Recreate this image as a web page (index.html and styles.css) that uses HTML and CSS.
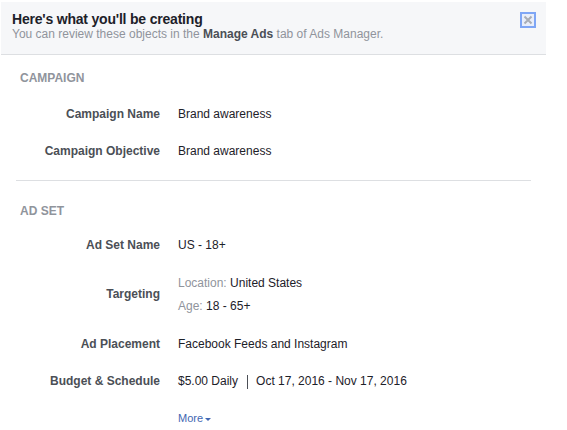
FILE: index.html
```html
<!DOCTYPE html>
<html>
<head>
<meta charset="utf-8">
<link rel="stylesheet" href="styles.css">
</head>
<body>
<div class="panel">
  <div class="header">
    <div class="header-text">
      <div class="title">Here's what you'll be creating</div>
      <div class="subtitle">You can review these objects in the <b>Manage Ads</b> tab of Ads Manager.</div>
    </div>
    <svg class="close" width="16" height="16" viewBox="0 0 16 16">
      <rect x="1" y="1" width="14" height="14" fill="#e9eefa" stroke="#7fa6f5" stroke-width="2"/>
      <path d="M4.5 4.5 L11.5 11.5 M11.5 4.5 L4.5 11.5" stroke="#a9adb5" stroke-width="2"/>
    </svg>
  </div>

  <div class="section first">
    <div class="section-title">CAMPAIGN</div>
    <div class="row">
      <div class="label">Campaign Name</div>
      <div class="value">Brand awareness</div>
    </div>
    <div class="row">
      <div class="label">Campaign Objective</div>
      <div class="value">Brand awareness</div>
    </div>
  </div>

  <div class="divider"></div>

  <div class="section second">
    <div class="section-title">AD SET</div>
    <div class="row">
      <div class="label">Ad Set Name</div>
      <div class="value">US - 18+</div>
    </div>
    <div class="row multi">
      <div class="label">Targeting</div>
      <div class="value lines">
        <div class="line"><span class="muted">Location:</span> United States</div>
        <div class="line"><span class="muted">Age:</span> 18 - 65+</div>
      </div>
    </div>
    <div class="row">
      <div class="label">Ad Placement</div>
      <div class="value">Facebook Feeds and Instagram</div>
    </div>
    <div class="row">
      <div class="label">Budget &amp; Schedule</div>
      <div class="value">$5.00 Daily<span class="sep"></span>Oct 17, 2016 - Nov 17, 2016</div>
    </div>
    <div class="row">
      <div class="label"></div>
      <div class="value"><a class="more">More<span class="caret"></span></a></div>
    </div>
  </div>
</div>
</body>
</html>
```

FILE: styles.css
```css
html, body {
  margin: 0;
  padding: 0;
  background: #ffffff;
}

body {
  font-family: "Liberation Sans", Arial, Helvetica, sans-serif;
  font-size: 12px;
  color: #1d2129;
}

.panel {
  width: 545px;
  margin: 2px 0 0 1px;
}

.header {
  background: #f6f7f9;
  border-bottom: 1px solid #dddfe2;
  padding: 9px 10px 13px 11px;
  display: flex;
  justify-content: space-between;
  align-items: flex-start;
}

.title {
  font-size: 14px;
  font-weight: bold;
  line-height: 16px;
  letter-spacing: -0.2px;
  color: #1d2129;
}

.subtitle {
  font-size: 12px;
  line-height: 14px;
  color: #90949c;
}

.subtitle b {
  color: #4b4f56;
  font-weight: bold;
}

.close {
  display: block;
  margin-top: 1px;
}

.section-title {
  font-size: 12px;
  font-weight: bold;
  line-height: 16px;
  color: #90949c;
  padding-left: 19px;
}

.section.first .section-title {
  margin: 15px 0 10px;
}

.section.second .section-title {
  margin: 22px 0 8px;
}

.row {
  display: flex;
  align-items: center;
  gap: 18px;
  padding: 10px 0;
  line-height: 17px;
}

.row.multi {
  padding: 11px 0 12px;
}

.label {
  width: 159px;
  flex: none;
  text-align: right;
  font-weight: bold;
  color: #4b4f56;
}

.value {
  color: #1d2129;
  display: flex;
  align-items: center;
}

.value.lines {
  flex-direction: column;
  align-items: flex-start;
  gap: 7px;
}

.line {
  line-height: 16px;
}

.muted {
  color: #90949c;
}

.sep {
  display: inline-block;
  width: 1px;
  height: 14px;
  background: #4b4f56;
  margin: 0 8px 0 9px;
}

.divider {
  height: 1px;
  background: #dddfe2;
  margin: 10px 15px 0 15px;
}

.more {
  color: #4267b2;
  font-size: 11px;
  display: inline-flex;
  align-items: center;
  cursor: pointer;
}

.caret {
  display: inline-block;
  width: 0;
  height: 0;
  border-left: 3px solid transparent;
  border-right: 3px solid transparent;
  border-top: 3px solid #4267b2;
  margin-left: 2px;
  margin-top: 1px;
}
```
